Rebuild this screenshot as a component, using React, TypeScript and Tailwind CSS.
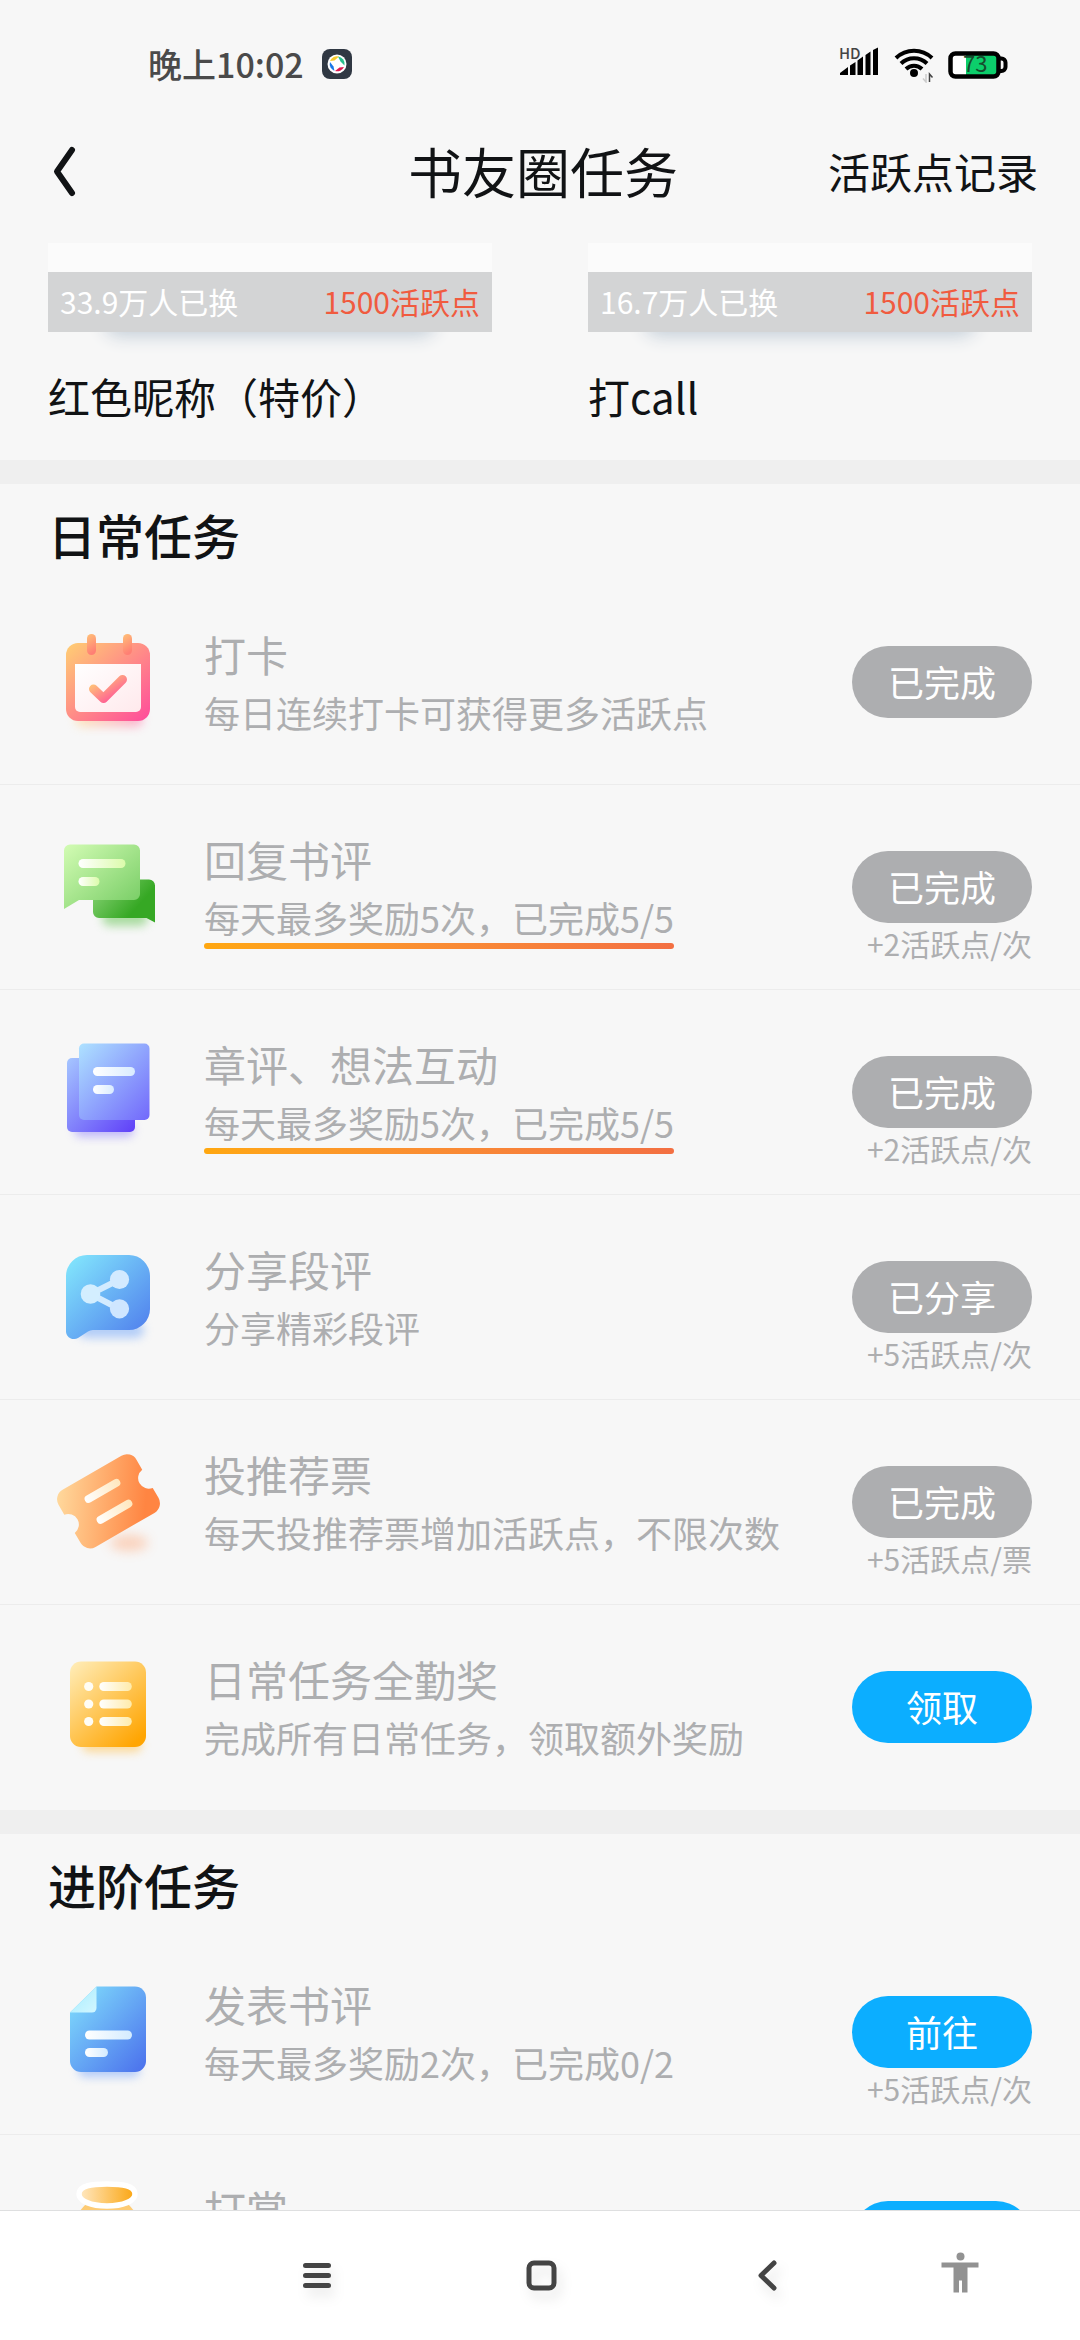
import React from 'react';

type Task = {
  title: string;
  desc: string;
  action: string;
  note?: string;
  done?: boolean;
  underline?: boolean;
  icon: React.ReactNode;
};

function Gradient({ id, from, to, x2 = 1, y2 = 1 }: { id: string; from: string; to: string; x2?: number; y2?: number }) {
  return (
    <linearGradient id={id} x1="0" y1="0" x2={x2} y2={y2}>
      <stop offset="0" stopColor={from} />
      <stop offset="1" stopColor={to} />
    </linearGradient>
  );
}

function TaskIcon({ children }: { children: React.ReactNode }) {
  return (
    <svg viewBox="0 0 120 120" className="mt-[39px] size-[120px] shrink-0 overflow-visible" aria-hidden="true">
      {children}
    </svg>
  );
}

function CalendarIcon() {
  return (
    <TaskIcon>
      <defs>
        <Gradient id="cal" from="#ffcf73" to="#ff4a9b" />
        <Gradient id="calPin" from="#ffc178" to="#ff7f74" x2={0.3} />
        <Gradient id="calPaper" from="#ffffff" to="#ffe9ec" />
        <Gradient id="calShadow" from="#ffdf9a" to="#ff7fb2" y2={0} />
      </defs>
      <rect x="27" y="92" width="68" height="16" rx="8" fill="url(#calShadow)" opacity="0.6" className="blur-[5px]" />
      <rect x="18" y="24" width="84" height="78" rx="12" fill="url(#cal)" />
      <path d="M27 45h66v43a5 5 0 0 1-5 5H32a5 5 0 0 1-5-5z" fill="url(#calPaper)" />
      <rect x="39" y="15" width="9" height="21" rx="4.5" fill="url(#calPin)" />
      <rect x="75" y="15" width="9" height="21" rx="4.5" fill="url(#calPin)" />
      <path d="M45.500 70L55.500 79.500L74.500 60.500" fill="none" stroke="url(#cal)" strokeWidth="9" strokeLinecap="round" strokeLinejoin="round" />
    </TaskIcon>
  );
}

function ReplyIcon() {
  return (
    <TaskIcon>
      <defs>
        <Gradient id="repFront" from="#d3fcb4" to="#74cb62" />
        <Gradient id="repBack" from="#8fd67c" to="#36a824" x2={0.8} y2={0.5} />
        <Gradient id="repLine" from="#ffffff" to="#dcfbab" y2={0} />
      </defs>
      <rect x="54" y="86" width="46" height="16" rx="8" fill="#5cc04a" opacity="0.5" className="blur-[5px]" />
      <path d="M51 55.500h50a6 6 0 0 1 6 6V98.500L98.500 94H51a6 6 0 0 1-6-6V61z" fill="url(#repBack)" />
      <path d="M22 20.500h64a6 6 0 0 1 6 6v43.500a6 6 0 0 1-6 6H31L16 85V26.500a6 6 0 0 1 6-6z" fill="url(#repFront)" />
      <rect x="30.500" y="35" width="47" height="9" rx="4.500" fill="url(#repLine)" />
      <rect x="30.500" y="53" width="21" height="9" rx="4.500" fill="url(#repLine)" />
    </TaskIcon>
  );
}

function NotesIcon() {
  return (
    <TaskIcon>
      <defs>
        <Gradient id="noteFront" from="#aee2ff" to="#7268fb" />
        <Gradient id="noteBack" from="#a5c6ff" to="#5f3ff8" />
        <Gradient id="noteLine" from="#ffffff" to="#d9ebff" y2={0} />
      </defs>
      <rect x="26" y="94" width="60" height="14" rx="7" fill="#8a7bfa" opacity="0.5" className="blur-[5px]" />
      <rect x="19" y="29" width="68" height="74" rx="5" fill="url(#noteBack)" />
      <rect x="31" y="14.500" width="70.500" height="76.500" rx="5" fill="url(#noteFront)" />
      <rect x="45" y="38" width="42" height="9" rx="4.500" fill="url(#noteLine)" />
      <rect x="45" y="56" width="21" height="9" rx="4.500" fill="url(#noteLine)" />
    </TaskIcon>
  );
}

function ShareIcon() {
  return (
    <TaskIcon>
      <defs>
        <Gradient id="share" from="#84eafd" to="#4d79ec" />
      </defs>
      <rect x="30" y="88" width="66" height="16" rx="8" fill="#79aaf8" opacity="0.55" className="blur-[5px]" />
      <path d="M39 21h42a21 21 0 0 1 21 21v33a21 21 0 0 1-21 21H45q-3 0-5 1.500L30 104a8 8 0 0 1-12-6V42a21 21 0 0 1 21-21z" fill="url(#share)" />
      <path d="M71.500 45.500L42.500 60L71.500 75" fill="none" stroke="#d3ebff" strokeWidth="6" />
      <circle cx="71.500" cy="45.500" r="9.600" fill="#d3eaff" />
      <circle cx="42.500" cy="60" r="9.800" fill="#d3eeff" />
      <circle cx="71.500" cy="74.800" r="9.600" fill="#cfe6ff" />
    </TaskIcon>
  );
}

function TicketIcon() {
  return (
    <TaskIcon>
      <defs>
        <Gradient id="ticket" from="#ffdca0" to="#ff8542" y2={0.5} />
        <Gradient id="ticketLine" from="#ffffff" to="#ffe7bd" y2={0} />
      </defs>
      <ellipse cx="81" cy="104" rx="19" ry="8" fill="#ff9a63" opacity="0.4" className="blur-[6px]" />
      <g transform="translate(60.500 62.300) rotate(-30)">
        <path
          d="M-34 -33H34a11 11 0 0 1 11 11V-10.500a10.600 10.600 0 0 0 0 21V22a11 11 0 0 1-11 11H-34a11 11 0 0 1-11-11V10.500a10.600 10.600 0 0 0 0-21V-22a11 11 0 0 1 11-11z"
          fill="url(#ticket)"
        />
        <rect x="-20" y="-16" width="40" height="8" rx="4" fill="url(#ticketLine)" />
        <rect x="-20" y="8" width="40" height="8" rx="4" fill="url(#ticketLine)" />
      </g>
    </TaskIcon>
  );
}

function ListIcon() {
  return (
    <TaskIcon>
      <defs>
        <Gradient id="list" from="#ffeebb" to="#ffa502" x2={0.8} />
        <Gradient id="listLine" from="#ffffff" to="#ffebaa" y2={0} />
      </defs>
      <rect x="34" y="94" width="60" height="14" rx="7" fill="#ffc04a" opacity="0.55" className="blur-[5px]" />
      <rect x="22" y="17.500" width="76" height="85.500" rx="11" fill="url(#list)" />
      {[42.5, 60, 77.5].map((y) => (
        <g key={y}>
          <circle cx="40.700" cy={y} r="4.600" fill="#fffdf5" />
          <rect x="51.300" y={y - 4.5} width="32.500" height="9" rx="4.500" fill="url(#listLine)" />
        </g>
      ))}
    </TaskIcon>
  );
}

function DocIcon() {
  return (
    <TaskIcon>
      <defs>
        <Gradient id="doc" from="#82e2fd" to="#4a6fec" />
        <Gradient id="docFold" from="#a5ecff" to="#d3f7ff" />
        <Gradient id="docLine" from="#ffffff" to="#d3ebff" y2={0} />
      </defs>
      <rect x="30" y="94" width="62" height="14" rx="7" fill="#7ba6f9" opacity="0.55" className="blur-[5px]" />
      <path d="M48.500 17.500H87a11 11 0 0 1 11 11V92a11 11 0 0 1-11 11H33a11 11 0 0 1-11-11V43.500z" fill="url(#doc)" />
      <path d="M48.500 17.500V39a4.500 4.500 0 0 1-4.500 4.500H22z" fill="url(#docFold)" />
      <rect x="37" y="61.500" width="47" height="9" rx="4.500" fill="url(#docLine)" />
      <rect x="37" y="79" width="23" height="9" rx="4.500" fill="url(#docLine)" />
    </TaskIcon>
  );
}

function RewardIcon() {
  return (
    <TaskIcon>
      <defs>
        <Gradient id="bag" from="#ffe9c4" to="#fba510" y2={0} />
      </defs>
      <path d="M38 30H80Q92 42 99 62a34 34 0 0 1-32 42H51A34 34 0 0 1 19 62Q26 42 38 30z" fill="#fdcb74" />
      <path d="M59 10c14 0 28 1 28 10 0 7-12 12-28 12s-28-5-28-12c0-9 14-10 28-10z" fill="url(#bag)" stroke="#fff" strokeWidth="5.500" />
    </TaskIcon>
  );
}

const dailyTasks: Task[] = [
  { title: '打卡', desc: '每日连续打卡可获得更多活跃点', action: '已完成', done: true, icon: <CalendarIcon /> },
  { title: '回复书评', desc: '每天最多奖励5次，已完成5/5', action: '已完成', note: '+2活跃点/次', done: true, underline: true, icon: <ReplyIcon /> },
  { title: '章评、想法互动', desc: '每天最多奖励5次，已完成5/5', action: '已完成', note: '+2活跃点/次', done: true, underline: true, icon: <NotesIcon /> },
  { title: '分享段评', desc: '分享精彩段评', action: '已分享', note: '+5活跃点/次', done: true, icon: <ShareIcon /> },
  { title: '投推荐票', desc: '每天投推荐票增加活跃点，不限次数', action: '已完成', note: '+5活跃点/票', done: true, icon: <TicketIcon /> },
  { title: '日常任务全勤奖', desc: '完成所有日常任务，领取额外奖励', action: '领取', icon: <ListIcon /> },
];

const advancedTasks: Task[] = [
  { title: '发表书评', desc: '每天最多奖励2次，已完成0/2', action: '前往', note: '+5活跃点/次', icon: <DocIcon /> },
  { title: '打赏', desc: '', action: '前往', icon: <RewardIcon /> },
];

const rewards = [
  { name: '红色昵称（特价）', count: '33.9万人已换', price: '1500活跃点' },
  { name: '打call', count: '16.7万人已换', price: '1500活跃点' },
];

function StatusBar() {
  return (
    <div className="flex h-[100px] shrink-0 items-center justify-between pt-7 pr-[72px] pl-[148px]">
      <div className="flex items-center gap-[18px]">
        <span className="text-[34px] leading-[40px] font-medium text-[#4a4a4a]">晚上10:02</span>
        <svg viewBox="0 0 30 30" className="size-[30px]" aria-hidden="true">
          <rect width="30" height="30" rx="8" fill="#303843" />
          <circle cx="15" cy="15" r="9.500" fill="#fff" />
          <path d="M8 12a7.500 7.500 0 0 1 9-4.500L12.500 11.500z" fill="#f7cb2d" />
          <path d="M16 7.500a7.500 7.500 0 0 1 6.500 9L18.500 12.500z" fill="#27c08c" />
          <path d="M22 18a7.500 7.500 0 0 1-9 4l4.500-3.500z" fill="#e0184f" />
          <path d="M12.500 22A7.500 7.500 0 0 1 8 13l3.500 4.500z" fill="#1976e8" />
        </svg>
      </div>
      <div className="flex items-center gap-[14px]">
        <svg viewBox="0 0 40 34" className="h-[34px] w-10 overflow-visible" aria-label="HD">
          <path d="M0 28V26L8 20V28zM10 28V18.500L15.500 15V28zM17.500 28V13.500L23 9.500V28zM25.500 28V8L30.500 4.500V28zM33 28V3L38 .5V28z" fill="#000" />
          <text x="-1" y="12" fontSize="15" fontWeight="500" fill="#444" stroke="#f7f7f7" strokeWidth="1" paintOrder="stroke">HD</text>
        </svg>
        <svg viewBox="0 0 40 38" className="h-[38px] w-10" fill="none" stroke="#000" strokeWidth="4" aria-hidden="true">
          <path d="M2 13a26 26 0 0 1 36 0M7 18.500a18.500 18.500 0 0 1 26 0M12 24a11.500 11.500 0 0 1 16 0" />
          <circle cx="20" cy="28" r="2.500" fill="#000" strokeWidth="3" />
          <path d="M35.500 37V29l3 3.500" stroke="#444" strokeWidth="1.500" />
          <path d="M32 29v8l-3-3.500" stroke="#ccc" strokeWidth="1.500" />
        </svg>
        <svg viewBox="0 0 60 30" className="h-[30px] w-[60px] overflow-visible" aria-hidden="true">
          <rect x="2.500" y="4.500" width="48" height="23" rx="5" fill="#fff" />
          <path d="M18 6h32v20H18z" fill="#0cce6b" />
          <rect x="2.500" y="4.500" width="48" height="23" rx="5" fill="none" stroke="#000" strokeWidth="4.500" />
          <path d="M52 9.500h1.500a4 4 0 0 1 4 4v4.500a4 4 0 0 1-4 4H52" fill="none" stroke="#000" strokeWidth="4" />
          <text x="15" y="23" fontSize="22" fill="#174a2e">73</text>
        </svg>
      </div>
    </div>
  );
}

function TaskRow({ task }: { task: Task }) {
  return (
    <li className="flex min-h-[205px] items-start border-b border-[#ececec] px-12 last:border-b-transparent">
      {task.icon}
      <div className="min-w-0 flex-1 pt-11 pl-9 text-[#adaeb0]">
        <h3 className="text-[42px] leading-[60px]">{task.title}</h3>
        <p className="w-fit text-[36px] leading-[56px]">
          {task.desc}
          {task.underline && <span className="-mt-[2px] block h-[6px] rounded-full bg-linear-to-r from-[#ffa70f] to-[#f36f42]" />}
        </p>
      </div>
      <div className="flex shrink-0 flex-col items-end pt-[66px]">
        <button
          type="button"
          className={
            task.done
              ? 'h-[72px] w-[180px] rounded-full bg-[#adaeb0] pb-[2px] text-[36px] leading-[54px] text-white'
              : 'h-[72px] w-[180px] rounded-full bg-[#0caeff] pb-[2px] text-[36px] leading-[54px] text-white'
          }
        >
          {task.action}
        </button>
        {task.note && <span className="text-[30px] leading-[40px] text-[#adaeb0]">{task.note}</span>}
      </div>
    </li>
  );
}

function TaskSection({ title, tasks }: { title: string; tasks: Task[] }) {
  return (
    <section className="border-t-24 border-[#efefef]">
      <h2 className="h-24 px-12 pt-[14px] text-[48px] leading-[72px] font-medium text-[#111315]">{title}</h2>
      <ul>
        {tasks.map((task) => (
          <TaskRow key={task.title} task={task} />
        ))}
      </ul>
    </section>
  );
}

export default function App() {
  return (
    <div className="flex h-screen flex-col overflow-hidden bg-[#f7f7f7] font-['Noto_Sans_CJK_SC',sans-serif] text-[#111315]">
      <StatusBar />
      <header className="grid h-[143px] shrink-0 grid-cols-[1fr_auto_1fr] items-center pr-[42px] pb-[2px] pl-12">
        <button type="button" aria-label="返回" className="w-fit">
          <svg viewBox="0 0 32 56" className="h-14 w-8" fill="none" stroke="#111315" strokeWidth="6" strokeLinecap="round" strokeLinejoin="round">
            <path d="M24 7L9 28.500L24 50" />
          </svg>
        </button>
        <h1 className="text-[54px] leading-[80px]">书友圈任务</h1>
        <a href="#records" className="justify-self-end text-[42px] leading-[60px]">活跃点记录</a>
      </header>

      <main className="min-h-0 flex-1 overflow-hidden">
        <div className="grid grid-cols-2 gap-24 px-12 pb-[34px]">
          {rewards.map((reward) => (
            <article key={reward.name}>
              <div className="h-[29px] bg-[#fbfbfb]" />
              <div className="relative">
                <div className="absolute inset-x-14 bottom-0 h-8 rounded-full shadow-[0_4px_18px_#c3ced8]" />
                <div className="relative flex h-[60px] items-center justify-between bg-[#d3d4d5] px-3 pb-[2px] text-[30px] leading-[44px]">
                  <span className="text-white">{reward.count}</span>
                  <span className="text-[#f05b3f]">{reward.price}</span>
                </div>
              </div>
              <h3 className="mt-[34px] text-[42px] leading-[60px]">{reward.name}</h3>
            </article>
          ))}
        </div>
        <TaskSection title="日常任务" tasks={dailyTasks} />
        <TaskSection title="进阶任务" tasks={advancedTasks} />
      </main>

      <nav className="grid h-[130px] shrink-0 grid-cols-[204fr_225fr_225fr_225fr_162fr_39fr] items-center justify-items-center border-t border-[#dedfe0] bg-white">
        <button type="button" aria-label="最近任务" className="col-start-2">
          <svg viewBox="0 0 32 32" className="size-8 drop-shadow-[4px_8px_6px_#0000001a]" stroke="#444" strokeWidth="5" strokeLinecap="round">
            <path d="M4.500 5.500h23M4.500 15.500h23M4.500 25.500h23" />
          </svg>
        </button>
        <button type="button" aria-label="主屏幕">
          <svg viewBox="0 0 32 32" className="size-8 drop-shadow-[4px_8px_6px_#0000001a]" fill="none" stroke="#444" strokeWidth="5">
            <rect x="3" y="3" width="25" height="25" rx="5" />
          </svg>
        </button>
        <button type="button" aria-label="后退">
          <svg viewBox="0 0 32 32" className="size-8 drop-shadow-[4px_8px_6px_#0000001a]" fill="none" stroke="#444" strokeWidth="5" strokeLinecap="round" strokeLinejoin="round">
            <path d="M23 3L10 15.500L23 28" />
          </svg>
        </button>
        <button type="button" aria-label="无障碍">
          <svg viewBox="0 0 38 48" className="h-12 w-[38px]" fill="#929292">
            <circle cx="19.500" cy="4.500" r="4" />
            <path d="M.5 10.500h37v5H26.500V40.500h-5.500V28.500h-3V40.500h-5.500V15.500H.5z" />
          </svg>
        </button>
      </nav>
    </div>
  );
}
